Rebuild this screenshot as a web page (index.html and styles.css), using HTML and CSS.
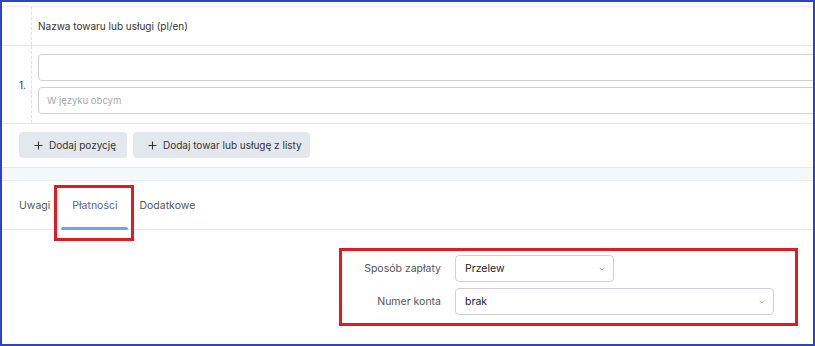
FILE: index.html
```html
<!DOCTYPE html>
<html lang="pl">
<head>
<meta charset="utf-8">
<title>Faktura</title>
<link rel="stylesheet" href="styles.css">
</head>
<body>
<div class="frame">
  <div class="items">
    <div class="thead">
      <div class="num-col"></div>
      <div class="name-col head-text">Nazwa towaru lub usługi (pl/en)</div>
    </div>
    <div class="trow">
      <div class="num-col num">1.</div>
      <div class="name-col inputs">
        <div class="input"></div>
        <div class="input placeholder">W języku obcym</div>
      </div>
    </div>
  </div>
  <div class="actions">
    <button class="btn"><svg class="plus" viewBox="0 0 9 9" width="9" height="9"><path d="M4.5 0.5v8M0.5 4.5h8" stroke="#333" stroke-width="1.1" fill="none"/></svg>Dodaj pozycję</button>
    <button class="btn"><svg class="plus" viewBox="0 0 9 9" width="9" height="9"><path d="M4.5 0.5v8M0.5 4.5h8" stroke="#333" stroke-width="1.1" fill="none"/></svg>Dodaj towar lub usługę z listy</button>
  </div>
  <div class="band"></div>
  <div class="tabs">
    <div class="tab">Uwagi</div>
    <div class="tab active">Płatności<span class="mark"></span></div>
    <div class="tab">Dodatkowe</div>
  </div>
  <div class="pay">
    <div class="pay-label">Sposób zapłaty</div>
    <div class="select short">Przelew<svg class="chev" viewBox="0 0 6 4" width="6" height="4"><path d="M0.7 0.8l2.3 2.3 2.3-2.3" stroke="#a8a8a8" stroke-width="0.9" fill="none"/></svg></div>
    <div class="pay-label">Numer konta</div>
    <div class="select long">brak<svg class="chev" viewBox="0 0 6 4" width="6" height="4"><path d="M0.7 0.8l2.3 2.3 2.3-2.3" stroke="#a8a8a8" stroke-width="0.9" fill="none"/></svg></div>
  </div>
</div>
</body>
</html>
```
FILE: styles.css
```css
* { box-sizing: border-box; }
html, body { margin: 0; padding: 0; background: #fff; }
body { font-family: Inter, "Noto Sans", sans-serif; font-size: 10px; color: #333; }
.frame {
  width: 815px; height: 346px;
  border: 2px solid #2f43c2;
  overflow: hidden;
  position: relative;
  background: #fff;
}
.items { width: 900px; margin-top: 4px; }
.thead {
  display: flex;
  height: 40px;
  border-top: 1px solid #e8ebee;
  border-bottom: 1px solid #e6e8eb;
}
.num-col {
  width: 30px;
  flex: none;
  border-right: 1px dashed #dcdfe3;
}
.name-col { flex: 1; padding-left: 6px; }
.head-text { display: flex; align-items: center; color: #333; font-size: 10px; }
.trow {
  display: flex;
  height: 78px;
  border-bottom: 1px solid #e6e8eb;
}
.num { display: flex; align-items: center; justify-content: flex-end; padding-right: 5px; padding-top: 1px; font-size: 10px; }
.inputs { display: flex; flex-direction: column; gap: 6px; padding-top: 8px; }
.input {
  height: 27px;
  border: 1px solid #cdd1d6;
  border-radius: 4px;
  display: flex; align-items: center;
  padding-left: 8px;
}
.placeholder { color: #a3a6ab; font-size: 9.5px; }
.actions {
  display: flex;
  gap: 6px;
  padding: 8px 0 9px 17px;
}
.btn {
  height: 26px;
  border: none;
  border-radius: 4px;
  background: #e3e8ee;
  font-family: inherit;
  font-size: 10px;
  color: #333;
  display: flex; align-items: center;
  gap: 6px;
  padding: 0 0 0 15px;
  margin: 0;
  white-space: nowrap;
}
.btn:first-child { width: 108px; }
.btn:last-child { width: 177px; }
.plus { flex: none; }
.band {
  height: 14px;
  background: #f6f7f9;
  border-top: 1px solid #e6e8eb;
  border-bottom: 1px solid #e8eaed;
}
.tabs {
  display: flex;
  height: 49px;
  padding-left: 6px;
  border-bottom: 1px solid #e6e8eb;
  font-size: 10.5px;
}
.tab {
  display: flex; align-items: center;
  padding: 0 11px;
  color: #555;
  position: relative;
}
.tab.active { color: #5a5ea6; }
.tab.active::after {
  content: "";
  position: absolute;
  left: 0; right: 0; bottom: -1px;
  height: 3px;
  border-radius: 2px;
  background: #6ea6e8;
}
.mark {
  position: absolute;
  left: -7px; top: 4px;
  width: 80px; height: 56px;
  border: 3px solid #e01b22;
  z-index: 2;
}
.pay {
  margin: 18px 0 0 337px;
  width: 459px;
  border: 3px solid #e01b22;
  padding: 4px 0 8px 0;
  display: grid;
  grid-template-columns: 99px auto;
  column-gap: 14px;
  row-gap: 6px;
  align-items: center;
  justify-items: start;
  font-size: 10.5px;
}
.pay-label { justify-self: end; color: #555; }
.select {
  height: 27px;
  border: 1px solid #cdd1d6;
  border-radius: 4px;
  display: flex; align-items: center; justify-content: space-between;
  padding: 0 8px 0 9px;
  color: #222;
  font-weight: 400;
}
.select.short { width: 159px; }
.select.long { width: 319px; }
.chev { flex: none; }
```
